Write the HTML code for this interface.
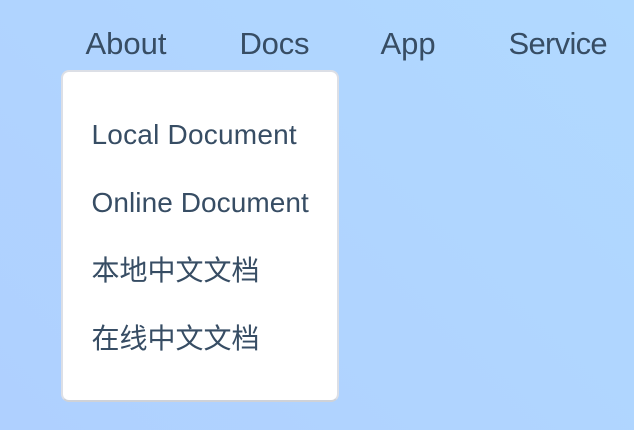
<!DOCTYPE html>
<html><head><meta charset="utf-8"><style>
html,body{margin:0;padding:0}
body{width:634px;height:430px;overflow:hidden;position:relative;background:linear-gradient(45deg,#afd0ff 0%,#b1d9ff 100%);color:#374d64;font-family:"Liberation Sans","Noto Sans CJK SC",sans-serif}
.n{position:absolute;top:26px;font-size:31px;line-height:36px;white-space:nowrap}
.box{position:absolute;left:61px;top:70px;width:274px;height:328px;background:#fff;border:2px solid #dcdfe6;border-bottom-color:#cfd2d8;border-radius:8px}
.i{position:absolute;left:91.5px;font-size:28px;line-height:34px;white-space:nowrap}
</style></head><body>
<div class="n" style="left:85.5px">About</div>
<div class="n" style="left:239.5px;letter-spacing:-.2px">Docs</div>
<div class="n" style="left:380.5px">App</div>
<div class="n" style="left:508.5px;letter-spacing:-.7px">Service</div>
<div class="box"></div>
<div class="i" style="top:118px;letter-spacing:.22px">Local Document</div>
<div class="i" style="top:186px;letter-spacing:.07px">Online Document</div>
<div class="i" style="top:254px">本地中文文档</div>
<div class="i" style="top:322px">在线中文文档</div>
</body></html>
